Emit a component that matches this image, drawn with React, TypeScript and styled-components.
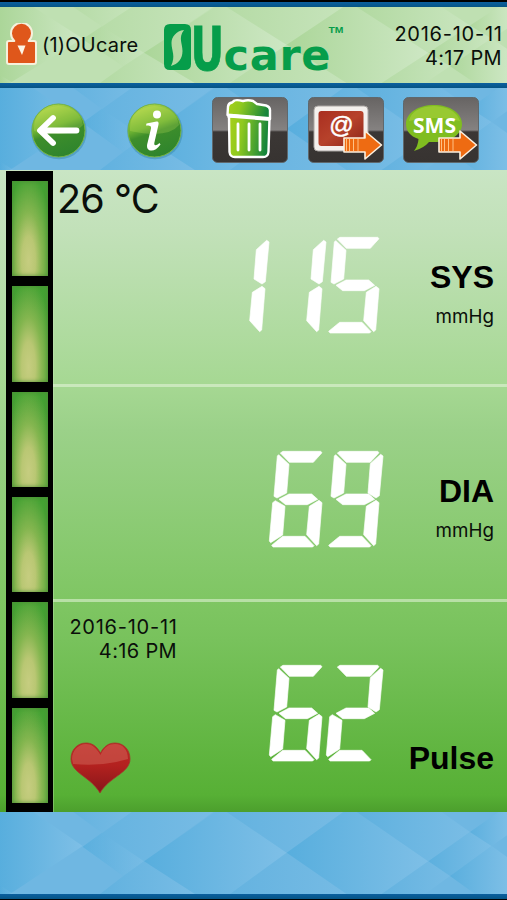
import React from "react";
import styled, { createGlobalStyle } from "styled-components";

const GlobalStyle = createGlobalStyle`
  *, *::before, *::after { box-sizing: border-box; }
  body { margin: 0; background: #000; font-family: Inter, "Liberation Sans", sans-serif; color: #0a0f0a; }
  svg { display: block; }
`;

const Screen = styled.div`
  display: flex;
  flex-direction: column;
  width: 507px;
  height: 900px;
  overflow: hidden;
`;

const StatusStrip = styled.div`
  height: 2px;
  background: #000;
`;

const Rule = styled.div<{ $h: number }>`
  flex: none;
  height: ${(p) => p.$h}px;
  background: linear-gradient(#0b609f, #055485);
`;

const Band = styled.div<{ $h: number; $base: string }>`
  position: relative;
  isolation: isolate;
  flex: none;
  display: flex;
  height: ${(p) => p.$h}px;
  background: ${(p) => p.$base};
`;

const Backdrop = styled.svg`
  position: absolute;
  inset: 0;
  z-index: -1;
  width: 100%;
  height: 100%;
`;

const HeaderBand = styled(Band)`
  padding: 0 5px;
  & > * { flex: none; }
`;

const User = styled.div`
  display: flex;
  align-items: center;
  gap: 4px;
  width: 155px;
`;

const UserName = styled.span`
  font-size: 20px;
  letter-spacing: 0.2px;
  white-space: nowrap;
`;

const Stamp = styled.div`
  font-size: 20px;
  line-height: 24px;
  text-align: right;
  white-space: nowrap;
`;

const StampDate = styled.div`
  margin-right: -0.7px;
  letter-spacing: 0.75px;
`;

const StampTime = styled.div`
  letter-spacing: 0.35px;
`;

const HeaderStamp = styled(Stamp)`
  width: 157px;
  padding-top: 15px;
`;

const ToolBand = styled(Band)`
  align-items: flex-start;
  gap: 28px;
  padding: 9px 0 0 30px;
`;

const ToolGroup = styled.div<{ $gap: number; $top: number }>`
  display: flex;
  gap: ${(p) => p.$gap}px;
  padding-top: ${(p) => p.$top}px;
`;

const ToolButton = styled.button`
  display: block;
  border: 0;
  padding: 0;
  background: none;
`;

const Monitor = styled.main`
  flex: none;
  display: flex;
  height: 642px;
  padding-left: 6px;
  background: linear-gradient(#c9e5c4 0, #c2e1b9 60px, #a6d893 214px, #9bd189 260px, #7fc663 430px, #78c25c 470px, #57b035 625px, #4c9f2d 642px);
`;

const Gauge = styled.div`
  display: flex;
  flex-direction: column;
  gap: 10.2px;
  width: 47px;
  margin-top: 1px;
  padding: 10px 5.5px 9px 6px;
  background: #000;
  box-shadow: 1px 0 0 rgba(200, 235, 190, 0.35);
`;

const GaugeCell = styled.div`
  flex: 1;
  background:
    radial-gradient(ellipse 68% 92% at 46% 84%, #c6cd80 0, #b9c773 28%, rgba(152, 188, 88, 0.75) 56%, rgba(70, 160, 52, 0) 100%),
    linear-gradient(#43a133, #4aa336);
  box-shadow: inset 0 0 4px #4b8c34;
`;

const Readings = styled.div`
  flex: 1;
  display: flex;
  flex-direction: column;
`;

const Reading = styled.section<{ $h: number; $line?: boolean }>`
  display: flex;
  height: ${(p) => p.$h}px;
  border-bottom: ${(p) => (p.$line ? "3px solid rgba(232, 246, 222, 0.55)" : "0")};
`;

const Side = styled.div`
  display: flex;
  flex-direction: column;
  width: 158px;
`;

const Temperature = styled.div`
  padding: 5px 0 0 4px;
  font-size: 39.5px;
  line-height: 48px;
  letter-spacing: -0.9px;
  white-space: nowrap;
`;

const MeasuredAt = styled(Stamp)`
  width: 124px;
  padding-top: 13px;
`;

const HeartSlot = styled.div`
  padding: 78px 0 0 17px;
`;

const DigitRow = styled.div<{ $top: number }>`
  display: flex;
  justify-content: flex-end;
  width: 171.500px;
  padding-top: ${(p) => p.$top}px;
`;

const Labels = styled.div<{ $top: number }>`
  flex: 1;
  padding: ${(p) => p.$top}px 13px 0 0;
  text-align: right;
`;

const LabelName = styled.div`
  font: bold 32px/38px "Liberation Sans", Arial, sans-serif;
  color: #000;
`;

const LabelUnit = styled.div`
  margin-top: 9px;
  font-size: 18.8px;
  line-height: 24px;
`;

type Tone = { light: string; dark: string };
const BLUE: Tone = { light: "#80c0e7", dark: "#55addd" };
const GREEN: Tone = { light: "#cfe8c6", dark: "#a9d596" };

const Diamonds = ({ id, tone }: { id: string; tone: Tone }) => (
  <Backdrop viewBox="0 0 1521 246" preserveAspectRatio="none" aria-hidden="true">
    <defs>
      <linearGradient id={id}>
        <stop offset="0" stopColor={tone.dark} stopOpacity="0.9" />
        <stop offset="1" stopColor={tone.light} stopOpacity="0.9" />
      </linearGradient>
    </defs>
    <g fill={`url(#${id})`}>
      <path d="M0 0H100L248 102L30 246H0Z" />
      <path d="M248 104L395 0H640L432 148L370 192Z" opacity="0.55" />
      <path d="M220 0H395L305 62Z" opacity="0.45" />
      <path d="M248 104L305 62L432 148L370 192Z" opacity="0.6" />
      <path d="M370 192L432 148L585 246H300Z" opacity="0.6" />
      <path d="M432 148L645 0H680L860 122L690 246H585Z" />
      <path d="M680 0H1030L860 122Z" opacity="0.5" />
      <path d="M860 122L1040 246H690Z" opacity="0.45" />
      <path d="M860 122L1030 0H1070L1285 148L1145 246H1040Z" />
      <path d="M1070 0H1325L1410 60L1285 148Z" opacity="0.7" />
      <path d="M1285 148L1410 60L1475 102L1350 192Z" opacity="0.8" />
      <path d="M1145 246L1285 148L1350 192L1275 246Z" opacity="0.5" />
      <path d="M1350 192L1475 102L1521 135V246H1425Z" opacity="0.9" />
      <path d="M1410 60L1495 0H1521V70L1475 102Z" opacity="0.8" />
      <path d="M0 220L40 246H0Z" opacity="0.5" />
    </g>
  </Backdrop>
);

const UserIcon = () => (
  <svg width="33" height="44" viewBox="0 0 33 44">
    <path
      d="M9.3 18A10.5 10.5 0 1 1 23.7 18H29Q31 18 31 20V39Q31 41 29 41H4Q2 41 2 39V20Q2 18 4 18Z"
      fill="#df571b" stroke="#f6f0dc" strokeWidth="2" strokeLinejoin="round"
    />
    <path d="M12.5 22.5H20.5L17 32Z" fill="#fdf5e6" />
  </svg>
);

const Logo = () => (
  <svg width="185" height="76" viewBox="160 7 185 76" fill="#069d4a">
    <path
      fillRule="evenodd"
      d="M170 24H185Q191 24 191 30V64Q191 70 185 70H170Q164 70 164 64V30Q164 24 170 24ZM184 30C176 31 171.500 37 171.500 43C171.500 51 176 56 171 66C178 64 182.500 59 182.500 51C182.500 43 178 38 184 30Z"
    />
    <g fontFamily="DejaVu Sans" fontWeight="700">
      <text transform="translate(190.500 69.500) scale(.69 1)" fontSize="60" stroke="#069d4a" strokeWidth="0.800">U</text>
      <text x="223.500" y="69.500" fontSize="43" textLength="107">care</text>
      <text x="328.500" y="32.500" fontSize="9.500" textLength="15" lengthAdjust="spacingAndGlyphs" fontFamily="Liberation Sans">TM</text>
    </g>
  </svg>
);

const RoundFace = ({ id, children }: { id: string; children: React.ReactNode }) => (
  <svg width="58" height="58" viewBox="0 0 58 58">
    <defs>
      <linearGradient id={id} x1="0.25" y1="0" x2="0.6" y2="1">
        <stop offset="0" stopColor="#b5d84c" />
        <stop offset="0.42" stopColor="#69af31" />
        <stop offset="0.55" stopColor="#3e8e2b" />
        <stop offset="1" stopColor="#2e842d" />
      </linearGradient>
    </defs>
    <circle cx="29" cy="29.500" r="27.800" fill="#2c7f9b" opacity="0.4" />
    <circle cx="28.500" cy="28.500" r="26.500" fill={`url(#${id})`} stroke="#78b543" strokeWidth="1" />
    <path d="M4 25Q5 6 28.500 4Q50 5 53 23Q42 37 4 29Z" fill="#d6ed66" opacity="0.22" />
    {children}
  </svg>
);

const BackIcon = () => (
  <RoundFace id="backFace">
    <path d="M46.500 28.500H12M23 16L10 28.500L23 41" fill="none" stroke="#fff" strokeWidth="5.800" strokeLinecap="round" strokeLinejoin="round" />
  </RoundFace>
);

const InfoIcon = () => (
  <RoundFace id="infoFace">
    <circle cx="31" cy="12.500" r="4" fill="#fff" />
    <path d="M20.500 21.500L30.500 19.500C33 19.500 32.800 21.500 32.300 23.500L28.300 41C28 44 30 44 33.500 41L34.500 42.500C31 47.500 27.500 49 24.500 48.500C21 48 20.500 44.500 21.500 41L25 26.500C25.500 23.500 23.500 23.500 20 23.500Z" fill="#fff" />
  </RoundFace>
);

const Tile = ({ id, children }: { id: string; children: React.ReactNode }) => (
  <svg width="76" height="66" viewBox="0 0 76 66">
    <defs>
      <linearGradient id={`${id}Tile`} x1="0" y1="0" x2="0" y2="1">
        <stop offset="0" stopColor="#676463" />
        <stop offset="0.5" stopColor="#858281" />
        <stop offset="0.53" stopColor="#3b3735" />
        <stop offset="1" stopColor="#373331" />
      </linearGradient>
      <linearGradient id={`${id}Leaf`} x1="0" y1="0" x2="1" y2="0.15">
        <stop offset="0" stopColor="#a8d01a" />
        <stop offset="0.35" stopColor="#8fc91f" />
        <stop offset="1" stopColor="#16853c" />
      </linearGradient>
      <linearGradient id={`${id}Red`} x1="0" y1="0" x2="1" y2="1">
        <stop offset="0" stopColor="#a92e20" />
        <stop offset="0.5" stopColor="#b7422b" />
        <stop offset="1" stopColor="#8c2419" />
      </linearGradient>
    </defs>
    <rect x="0.500" y="0.500" width="75" height="65" rx="5" fill={`url(#${id}Tile)`} stroke="#5f686d" strokeWidth="1" />
    {children}
  </svg>
);

const SendArrow = () => (
  <g>
    <path d="M36 41H57V34L73.500 48L57 62V55H36Z" fill="#ee6b12" stroke="#fbf0e0" strokeWidth="1.600" strokeLinejoin="round" />
    <path d="M38.500 42V54M41.500 42V54M45.500 42V54M50 42V54" stroke="#ffc184" strokeWidth="1" />
  </g>
);

const TrashIcon = () => (
  <Tile id="trash">
    <path d="M17 19L57.500 21L56.500 55Q56 60 51 60H23Q18 60 17.500 55Z" fill="url(#trashLeaf)" stroke="#fff" strokeWidth="2.400" />
    <path d="M15.500 18L16 9.500Q16.500 6 20 5.500L22.500 3.500Q25 2.500 31 4Q36 2.500 41 4L45 7L54 8.500Q58.500 10 58 14.500V22Z" fill="url(#trashLeaf)" stroke="#fff" strokeWidth="2.400" strokeLinejoin="round" />
    <path d="M15.500 18.500L58 22" stroke="#fff" strokeWidth="4" />
    <path d="M26 27V53M37 27V53M48 27V53" stroke="#fff" strokeWidth="2.800" strokeLinecap="round" />
  </Tile>
);

const EmailIcon = () => (
  <Tile id="email">
    <rect x="6" y="9" width="54" height="45" rx="4" fill="#f4f0ed" stroke="#aaa5a2" strokeWidth="1" />
    <rect x="10.500" y="14" width="45" height="35" rx="3" fill="url(#emailRed)" />
    <text x="33.500" y="36" textAnchor="middle" fontFamily="Liberation Sans" fontSize="24" fill="#fff" stroke="#fff" strokeWidth="0.500">@</text>
    <SendArrow />
  </Tile>
);

const SmsIcon = () => (
  <Tile id="sms">
    <path d="M31 8C47 8 59 16 59 27C59 38 47 45 31 45L26 45Q21 51 11 54Q15 49 15.500 42C7 39 3 34 3 27C3 16 15 8 31 8Z" fill="#80bd20" />
    <path d="M6 24Q9 10 31 9Q52 10 57 24Q32 18 6 24Z" fill="#c6df54" opacity="0.35" />
    <text x="10" y="35.500" fontFamily="Open Sans" fontWeight="700" fontSize="21" fill="#fff" textLength="43" lengthAdjust="spacingAndGlyphs">SMS</text>
    <SendArrow />
  </Tile>
);

const Heart = () => (
  <svg width="61" height="54" viewBox="0 0 61 54">
    <defs>
      <linearGradient id="heartFill" x1="0" y1="0" x2="0" y2="1">
        <stop offset="0" stopColor="#bd2824" />
        <stop offset="0.45" stopColor="#b3211f" />
        <stop offset="1" stopColor="#87161a" />
      </linearGradient>
    </defs>
    <path d="M30.500 12C26 4 21 2 16 2C7 2 1 9 1 18C1 32 21 36 30 52C39 36 60 32 60 18C60 9 54 2 45 2C39 2 34 5 30.500 12Z" fill="url(#heartFill)" stroke="#a4352c" strokeWidth="0.800" />
    <path d="M30.500 14C26 6 21 3 16 3C8 3 2 10 2 18L3 23Q32 26 58 18C58 9 53 3 45 3C39 3 34 6 30.500 14Z" fill="#d8776a" opacity="0.4" />
  </svg>
);

const SEGMENTS: Record<string, string> = {
  a: "M34 6L42 1H155L159 5L133 34H61Z",
  b: "M164 10L171 15L160 134L150 141L126 126L133 38Z",
  c: "M150 148L159 155L149 279L143 284L113 251L121 166Z",
  d: "M41 256H108L135 284L131 288H12L8 283Z",
  e: "M19 149L48 166L41 252L5 275L1 270L11 155Z",
  f: "M29 11L60 40L53 126L24 141L15 136L25 15Z",
  g: "M30 145L60 129H128L146 145L115 161H50Z",
};

const LIT: Record<string, string> = {
  "1": "bc",
  "2": "abged",
  "5": "afgcd",
  "6": "afgecd",
  "9": "abfgcd",
};

const Digits = ({ value, top }: { value: string; top: number }) => (
  <DigitRow $top={top} role="img" aria-label={value}>
    {value.split("").map((n, i) => (
      <svg key={i} width="57" height="97" viewBox="0 0 171 291" overflow="visible">
        {LIT[n].split("").map((s) => (
          <path key={s} d={SEGMENTS[s]} fill="#fff" stroke="#fff" strokeWidth="2" strokeLinejoin="round" />
        ))}
      </svg>
    ))}
  </DigitRow>
);

export default function App() {
  return (
    <>
      <GlobalStyle />
      <Screen>
        <StatusStrip />
        <Rule $h={5} />
        <HeaderBand as="header" $h={76} $base="#bfe0b2">
          <Diamonds id="headerTone" tone={GREEN} />
          <User>
            <UserIcon />
            <UserName>(1)OUcare</UserName>
          </User>
          <Logo />
          <HeaderStamp>
            <StampDate>2016-10-11</StampDate>
            <StampTime>4:17 PM</StampTime>
          </HeaderStamp>
        </HeaderBand>
        <Rule $h={5} />
        <ToolBand as="nav" $h={82} $base="#6fb7e2">
          <Diamonds id="toolTone" tone={BLUE} />
          <ToolGroup $gap={38} $top={5}>
            <ToolButton aria-label="Back"><BackIcon /></ToolButton>
            <ToolButton aria-label="Info"><InfoIcon /></ToolButton>
          </ToolGroup>
          <ToolGroup $gap={19.5} $top={0}>
            <ToolButton aria-label="Delete"><TrashIcon /></ToolButton>
            <ToolButton aria-label="Email"><EmailIcon /></ToolButton>
            <ToolButton aria-label="SMS"><SmsIcon /></ToolButton>
          </ToolGroup>
        </ToolBand>
        <Monitor>
          <Gauge>
            {[0, 1, 2, 3, 4, 5].map((n) => (
              <GaugeCell key={n} />
            ))}
          </Gauge>
          <Readings>
            <Reading $h={217} $line>
              <Side>
                <Temperature>26 °C</Temperature>
              </Side>
              <Digits value="115" top={66.5} />
              <Labels $top={88}>
                <LabelName>SYS</LabelName>
                <LabelUnit>mmHg</LabelUnit>
              </Labels>
            </Reading>
            <Reading $h={215} $line>
              <Side />
              <Digits value="69" top={63.5} />
              <Labels $top={85}>
                <LabelName>DIA</LabelName>
                <LabelUnit>mmHg</LabelUnit>
              </Labels>
            </Reading>
            <Reading $h={210}>
              <Side>
                <MeasuredAt>
                  <StampDate>2016-10-11</StampDate>
                  <StampTime>4:16 PM</StampTime>
                </MeasuredAt>
                <HeartSlot>
                  <Heart />
                </HeartSlot>
              </Side>
              <Digits value="62" top={62.5} />
              <Labels $top={137}>
                <LabelName>Pulse</LabelName>
              </Labels>
            </Reading>
          </Readings>
        </Monitor>
        <Band as="footer" $h={82} $base="#6fb7e2">
          <Diamonds id="footerTone" tone={BLUE} />
        </Band>
        <Rule $h={5} />
      </Screen>
    </>
  );
}
